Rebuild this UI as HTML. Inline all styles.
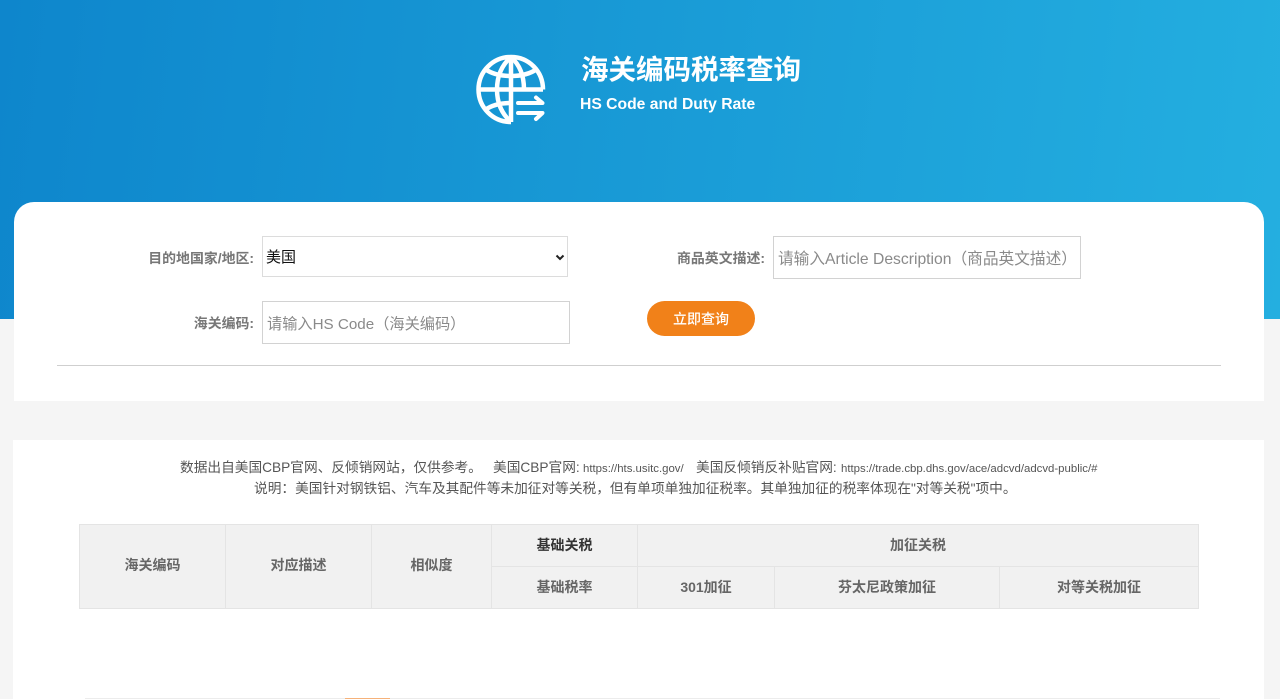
<!DOCTYPE html>
<html lang="zh-CN">
<head>
<meta charset="utf-8">
<title>海关编码税率查询</title>
<style>
*{box-sizing:border-box}
html,body{margin:0;padding:0;width:1280px;height:699px;overflow:hidden;background:#f5f5f5;font-family:"Liberation Sans","Noto Sans CJK SC",sans-serif}
.a{position:absolute;white-space:nowrap}
.hero{left:0;top:0;width:1280px;height:319px;background:linear-gradient(97deg,#0e86cc 0%,#24afe0 100%)}
.card{background:#fff}
.lab{font-size:13.900px;font-weight:700;color:#777;line-height:20px;text-align:right}
.box{background:#fff;border:1px solid #d2d2d2}
.ph{color:#8a8a8a;line-height:20px}
.th{position:absolute;display:flex;align-items:center;justify-content:center;padding-bottom:3px;background:#f1f1f1;border:1px solid #e4e4e4;font-size:14px;font-weight:700;color:#666}
.th.r{padding-bottom:1px}
.note{font-size:13.700px;color:#555;line-height:20px}
.url{font-size:11.400px;color:#555}
</style>
</head>
<body>
<div class="a hero"></div>

<svg class="a" style="left:474px;top:52px" width="74" height="74" viewBox="0 0 74 74" fill="none" stroke="#fff" stroke-width="4.500">
<path d="M37 70C19 70 4.500 55.500 4.500 37.500S19 5 37 5s32 14.500 32 32.500"/>
<path d="M37 5V70"/>
<path d="M4.500 37.500H69"/>
<path d="M37 5C28 13 23 24 23 37.500S28 62 37 70"/>
<path d="M37 5C46 13 50 24 50 37.500"/>
<path d="M11 17C18 22 27 24 37 24s19-2 26-7"/>
<path d="M11 58C18 53 27 51 37 51"/>
<path d="M44 51H68.500L62 45.500" stroke-linecap="round" stroke-linejoin="round" stroke-width="4"/>
<path d="M44 61H68.500L62 67" stroke-linecap="round" stroke-linejoin="round" stroke-width="4"/>
</svg>

<div class="a" style="left:581px;top:52px;font-size:27.500px;line-height:36px;font-weight:700;color:#fff">海关编码税率查询</div>
<div class="a" style="left:580px;top:94px;font-size:15.700px;line-height:21px;font-weight:700;color:#fff">HS Code and Duty Rate</div>

<div class="a card" style="left:14px;top:202px;width:1250px;height:199px;border-radius:20px 20px 0 0"></div>

<div class="a lab" style="left:100px;top:248px;width:154px">目的地国家/地区:</div>
<div class="a box" style="left:262px;top:236px;width:306px;height:41px;border-color:#dcdcdc;border-width:1.500px"></div>
<div class="a" style="left:266px;top:248px;font-size:15px;line-height:20px;color:#111">美国</div>
<svg class="a" style="left:555px;top:254px" width="10" height="7" viewBox="0 0 10 7"><path d="M1.500 1.500L5 5L8.500 1.500" fill="none" stroke="#222" stroke-width="2"/></svg>

<div class="a lab" style="left:610px;top:248px;width:155px">商品英文描述:</div>
<div class="a box" style="left:773px;top:236px;width:308px;height:43px"></div>
<div class="a ph" style="left:778px;top:250px;font-size:15.700px">请输入Article Description（商品英文描述）</div>

<div class="a lab" style="left:100px;top:313px;width:154px">海关编码:</div>
<div class="a box" style="left:262px;top:301px;width:308px;height:43px"></div>
<div class="a ph" style="left:267px;top:315px;font-size:15.200px">请输入HS Code（海关编码）</div>

<div class="a" style="left:647px;top:301px;width:108px;height:35px;border-radius:18px;background:#f18119;color:#fff;font-size:14px;font-weight:500;line-height:36px;text-align:center">立即查询</div>

<div class="a" style="left:57px;top:365px;width:1164px;height:1px;background:#cfcfcf"></div>

<div class="a card" style="left:13px;top:440px;width:1251px;height:259px"></div>

<div class="a note" style="left:180px;top:458px">数据出自美国CBP官网、反倾销网站，仅供参考。</div>
<div class="a note" style="left:493px;top:458px">美国CBP官网:</div>
<div class="a url" style="left:583px;top:459px;line-height:20px">https://hts.usitc.gov/</div>
<div class="a note" style="left:696px;top:458px">美国反倾销反补贴官网:</div>
<div class="a url" style="left:841px;top:459px;line-height:20px">https://trade.cbp.dhs.gov/ace/adcvd/adcvd-public/#</div>
<div class="a note" style="left:254px;top:479px">说明：美国针对钢铁铝、汽车及其配件等未加征对等关税，但有单项单独加征税率。其单独加征的税率体现在"对等关税"项中。</div>

<div class="th" style="left:79px;top:524px;width:147px;height:85px">海关编码</div>
<div class="th" style="left:225px;top:524px;width:147px;height:85px">对应描述</div>
<div class="th" style="left:371px;top:524px;width:121px;height:85px">相似度</div>
<div class="th r" style="left:491px;top:524px;width:147px;height:43px;color:#333">基础关税</div>
<div class="th r" style="left:637px;top:524px;width:562px;height:43px">加征关税</div>
<div class="th r" style="left:491px;top:566px;width:147px;height:43px">基础税率</div>
<div class="th r" style="left:637px;top:566px;width:138px;height:43px">301加征</div>
<div class="th r" style="left:774px;top:566px;width:226px;height:43px">芬太尼政策加征</div>
<div class="th r" style="left:999px;top:566px;width:200px;height:43px">对等关税加征</div>

<div class="a" style="left:85px;top:698px;width:1135px;height:1px;background:#ececec"></div>
<div class="a" style="left:345px;top:698px;width:45px;height:1px;background:#f6b27a"></div>
</body>
</html>
